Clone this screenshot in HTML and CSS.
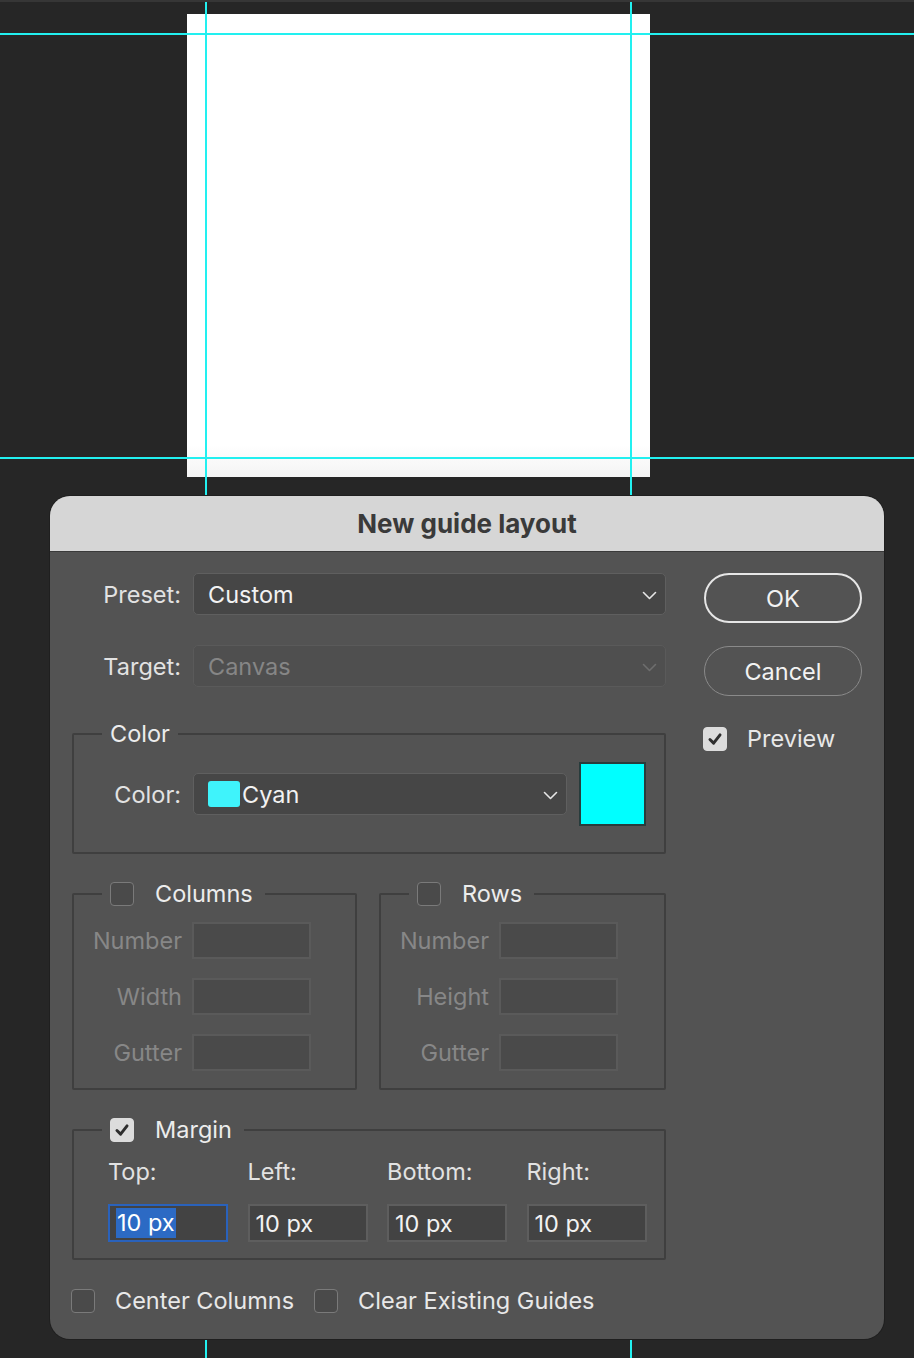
FILE: index.html
```html
<!DOCTYPE html>
<html lang="en">
<head>
<meta charset="utf-8">
<title>New guide layout</title>
<link rel="stylesheet" href="styles.css">
</head>
<body>
<div class="stage">
  <div class="doc"></div>
  <div class="guide gv gv1"></div>
  <div class="guide gv gv2"></div>
  <div class="guide gh gh1"></div>
  <div class="guide gh gh2"></div>

  <div class="dialog">
    <div class="titlebar">New guide layout</div>
    <div class="dbody">
      <div class="main">
        <div class="field">
          <span class="lbl">Preset:</span>
          <div class="select">
            <span class="sel-text">Custom</span>
            <svg class="chev" width="15" height="9" viewBox="0 0 15 9"><polyline points="1.5,1.5 7.5,7.5 13.5,1.5" fill="none" stroke="#e6e6e6" stroke-width="1.6" stroke-linecap="round" stroke-linejoin="round"/></svg>
          </div>
        </div>
        <div class="field target">
          <span class="lbl">Target:</span>
          <div class="select disabled">
            <span class="sel-text">Canvas</span>
            <svg class="chev" width="15" height="9" viewBox="0 0 15 9"><polyline points="1.5,1.5 7.5,7.5 13.5,1.5" fill="none" stroke="#6e6e6e" stroke-width="1.6" stroke-linecap="round" stroke-linejoin="round"/></svg>
          </div>
        </div>

        <fieldset class="group color-group">
          <legend class="legend">Color</legend>
          <div class="color-row">
            <span class="lbl">Color:</span>
            <div class="select">
              <span class="sel-text"><span class="mini-swatch"></span>Cyan</span>
              <svg class="chev" width="15" height="9" viewBox="0 0 15 9"><polyline points="1.5,1.5 7.5,7.5 13.5,1.5" fill="none" stroke="#e6e6e6" stroke-width="1.6" stroke-linecap="round" stroke-linejoin="round"/></svg>
            </div>
            <div class="big-swatch"></div>
          </div>
        </fieldset>

        <div class="pair">
          <fieldset class="group sub">
            <legend class="legend cb-legend"><span class="cb"></span><span>Columns</span></legend>
            <div class="num-grid">
              <span class="dlbl">Number</span><div class="dinput"></div>
              <span class="dlbl">Width</span><div class="dinput"></div>
              <span class="dlbl">Gutter</span><div class="dinput"></div>
            </div>
          </fieldset>
          <fieldset class="group sub">
            <legend class="legend cb-legend"><span class="cb"></span><span>Rows</span></legend>
            <div class="num-grid">
              <span class="dlbl">Number</span><div class="dinput"></div>
              <span class="dlbl">Height</span><div class="dinput"></div>
              <span class="dlbl">Gutter</span><div class="dinput"></div>
            </div>
          </fieldset>
        </div>

        <fieldset class="group margin-group">
          <legend class="legend cb-legend"><span class="cb checked"><svg width="24" height="24" viewBox="0 0 24 24"><polyline points="6.5,12.5 10.5,16.5 17.5,7.5" fill="none" stroke="#2e2e2e" stroke-width="3.2" stroke-linecap="round" stroke-linejoin="round"/></svg></span><span>Margin</span></legend>
          <div class="margin-grid">
            <span class="mlbl">Top:</span>
            <span class="mlbl">Left:</span>
            <span class="mlbl">Bottom:</span>
            <span class="mlbl">Right:</span>
            <div class="minput focused"><span class="selected">10 px</span></div>
            <div class="minput">10 px</div>
            <div class="minput">10 px</div>
            <div class="minput">10 px</div>
          </div>
        </fieldset>

        <div class="options">
          <span class="cb"></span><span class="opt-text">Center Columns</span>
          <span class="cb"></span><span class="opt-text">Clear Existing Guides</span>
        </div>
      </div>

      <div class="side">
        <div class="btn ok">OK</div>
        <div class="btn cancel">Cancel</div>
        <div class="preview">
          <span class="cb checked"><svg width="24" height="24" viewBox="0 0 24 24"><polyline points="6.5,12.5 10.5,16.5 17.5,7.5" fill="none" stroke="#2e2e2e" stroke-width="3.2" stroke-linecap="round" stroke-linejoin="round"/></svg></span>
          <span class="opt-text">Preview</span>
        </div>
      </div>
    </div>
  </div>
</div>
</body>
</html>
```

FILE: styles.css
```css
* { box-sizing: border-box; }
html, body { margin: 0; padding: 0; }
body {
  background: #262626;
  font-family: Inter, "Noto Sans", "Liberation Sans", sans-serif;
  font-size: 23.5px;
  color: #e4e4e4;
}
.stage {
  position: relative;
  width: 914px;
  height: 1358px;
  overflow: hidden;
  background: #262626;
  border-top: 2px solid #363636;
  padding: 494px 0 0 50px;
}
.doc {
  position: absolute;
  left: 187px;
  top: 12px;
  width: 463px;
  height: 463px;
  background: linear-gradient(to bottom, #ffffff 0%, #ffffff 93%, #f4f4f4 100%);
}
.guide {
  position: absolute;
  background: #22f0f0;
  z-index: 1;
}
.gv { top: 0; width: 2px; height: 1358px; }
.gh { left: 0; height: 2px; width: 914px; }
.gv1 { left: 205px; }
.gv2 { left: 630px; }
.gh1 { top: 31px; }
.gh2 { top: 455px; }

.dialog {
  position: relative;
  z-index: 2;
  width: 834px;
  background: #535353;
  border-radius: 20px;
  box-shadow: 0 0 0 1px #1f1f1f;
  overflow: hidden;
}
.titlebar {
  height: 56px;
  background: #d6d6d6;
  border-bottom: 1px solid #3a3a3a;
  color: #3a3a3a;
  font-weight: 700;
  font-size: 26px;
  display: flex;
  align-items: center;
  justify-content: center;
  padding-top: 0;
}
.dbody {
  display: grid;
  grid-template-columns: 594px 158px;
  column-gap: 38px;
  padding: 21px 22px 24px 22px;
}
.main { display: flex; flex-direction: column; }

.field {
  display: grid;
  grid-template-columns: 109px 1fr;
  column-gap: 12px;
  align-items: center;
}
.field.target { margin-top: 30px; }
.lbl {
  text-align: right;
  color: #e2e2e2;
}
.select {
  height: 42px;
  background: #464646;
  border: 1.5px solid #5f5f5f;
  border-radius: 5px;
  display: flex;
  align-items: center;
  justify-content: space-between;
  padding: 0 8px 0 14px;
  color: #f2f2f2;
}
.select.disabled {
  background: #4f4f4f;
  border-color: #5a5a5a;
  color: #868686;
}
.sel-text { display: flex; align-items: center; }
.chev { display: block; margin-top: 2px; }

.group {
  margin: 0;
  padding: 0;
  border: 2px solid #3f3f3f;
  border-radius: 2px;
  min-width: 0;
}
.legend {
  margin-left: 28px;
  padding: 0 8px;
  line-height: 26px;
  height: 26px;
  color: #ececec;
}
.cb-legend {
  display: flex;
  align-items: center;
  gap: 21px;
  padding: 0 12px 0 8px;
}
.color-group { margin-top: 34px; padding: 15px 0 26px 0; }
.color-row {
  display: grid;
  grid-template-columns: 107px 374px 67px;
  column-gap: 12px;
  align-items: center;
}
.mini-swatch {
  display: inline-block;
  width: 32px;
  height: 26px;
  background: #3ff3fb;
  border-radius: 3px;
  margin-right: 2px;
}
.color-row .select { padding-left: 14px; }
.big-swatch {
  height: 64px;
  background: #00ffff;
  border: 2px solid #283c3c;
}

.cb {
  display: inline-flex;
  width: 24px;
  height: 24px;
  flex: none;
  border: 1.5px solid #7a7a7a;
  border-radius: 4px;
  background: #4a4a4a;
  align-items: center;
  justify-content: center;
}
.cb.checked {
  background: #dcdcdc;
  border-color: #dcdcdc;
}
.cb.checked svg { display: block; }

.pair {
  margin-top: 27px;
  display: grid;
  grid-template-columns: 285px 287px;
  column-gap: 22px;
}
.sub { padding: 15px 0 17px 0; }
.num-grid {
  display: grid;
  grid-template-columns: 108px 119px;
  column-gap: 10px;
  row-gap: 19px;
  align-items: center;
}
.dlbl { text-align: right; color: #878787; }
.dinput {
  height: 37px;
  background: #4a4a4a;
  border: 2px solid #5a5a5a;
}

.margin-group { margin-top: 27px; padding: 16px 0 16px 0; }
.margin-grid {
  display: grid;
  grid-template-columns: repeat(4, 120px);
  column-gap: 19.5px;
  row-gap: 19px;
  padding-left: 34px;
}
.mlbl { line-height: 26px; color: #e2e2e2; }
.minput {
  height: 38px;
  background: #434343;
  border: 2px solid #5e5e5e;
  display: flex;
  align-items: center;
  padding-left: 6px;
  color: #f2f2f2;
}
.minput.focused { border-color: #2a62bb; }
.selected {
  background: #2c6ac4;
  color: #ffffff;
  line-height: 30px;
  padding: 0 1px;
}

.options {
  margin-top: 26px;
  display: flex;
  align-items: center;
  margin-left: -1px;
}
.options .cb + .opt-text { margin-left: 20px; }
.options .opt-text + .cb { margin-left: 20px; }
.opt-text { color: #e8e8e8; }

.side { display: flex; flex-direction: column; }
.btn {
  height: 50px;
  border-radius: 25px;
  display: flex;
  align-items: center;
  justify-content: center;
  color: #f2f2f2;
}
.btn.ok { border: 2px solid #e6e6e6; }
.btn.cancel { border: 1.5px solid #8a8a8a; margin-top: 23px; }
.preview {
  margin-top: 28px;
  display: flex;
  align-items: center;
  gap: 20px;
  margin-left: -1px;
}
```
